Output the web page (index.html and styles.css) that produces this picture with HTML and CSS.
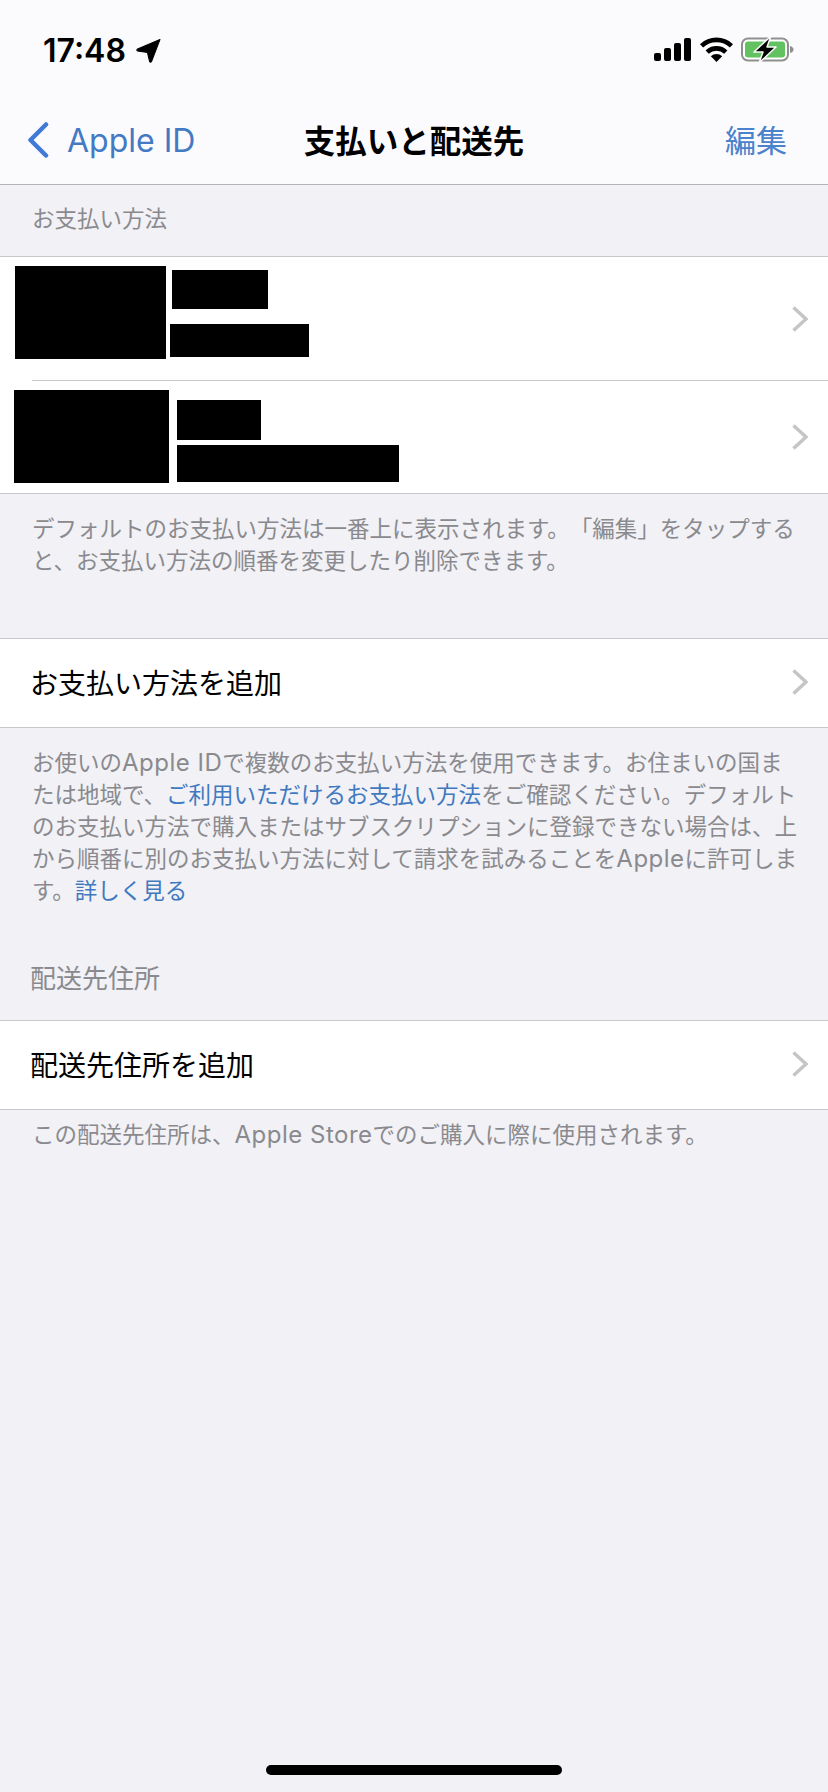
FILE: index.html
```html
<!DOCTYPE html>
<html lang="ja">
<head>
    <meta charset="UTF-8">
    <meta name="viewport" content="width=device-width, initial-scale=1.0">
    <title>支払いと配送先</title>
    <link rel="stylesheet" href="styles.css">
</head>
<body>
    <header class="top">
        <div class="status">
            <div class="time">
                <span>17:48</span>
                <svg class="arrow" viewBox="0 0 24 24"><path d="M23 1.500 L1.500 10.500 Q0 11.500 1.500 12.500 L11 14 L13 22.500 Q14 24 15 22.500 Z" fill="#000" stroke="#000" stroke-width="1" stroke-linejoin="round"/></svg>
            </div>
            <div class="status-icons">
                <svg class="signal" viewBox="0 0 37 23">
                    <rect x="0" y="15" width="7" height="8" rx="2"/>
                    <rect x="10" y="10" width="7" height="13" rx="2"/>
                    <rect x="20" y="5" width="7" height="18" rx="2"/>
                    <rect x="30" y="0" width="7" height="23" rx="2"/>
                </svg>
                <svg class="wifi" viewBox="0 0 32 24">
                    <path d="M1.500 8.500 A21 21 0 0 1 30.500 8.500" fill="none" stroke="#000" stroke-width="4.500"/>
                    <path d="M7 14.500 A13 13 0 0 1 25 14.500" fill="none" stroke="#000" stroke-width="4.500"/>
                    <path d="M16 24 L10.500 18.500 A8 8 0 0 1 21.500 18.500 Z"/>
                </svg>
                <svg class="battery" viewBox="0 0 53 25">
                    <rect x="1" y="1.500" width="46" height="22" rx="6" fill="#fff" stroke="#8f8f8f" stroke-width="2"/>
                    <rect x="4" y="4.500" width="40" height="16" rx="3" fill="#62c261"/>
                    <path d="M49 9 Q52.500 10 52.500 12.500 Q52.500 15 49 16 Z" fill="#8f8f8f"/>
                    <path d="M30 -1 L13 15 H22 L18 26 L35 10 H26 Z" fill="#000" stroke="#fbfbfd" stroke-width="1.500" stroke-linejoin="round"/>
                </svg>
            </div>
        </div>
        <nav class="nav">
            <a class="back">
                <svg class="back-chevron" viewBox="0 0 22 36"><path d="M19 2.500 L3.500 18 L19 33.500" fill="none" stroke="#3f7ad6" stroke-width="4.500" stroke-linecap="round" stroke-linejoin="round"/></svg>
                <span>Apple ID</span>
            </a>
            <h1 class="title">支払いと配送先</h1>
            <a class="edit">編集</a>
        </nav>
    </header>

    <main class="content">
        <div class="label label-first">お支払い方法</div>
        <section class="list">
            <div class="row row-card1">
                <div class="mask mask-a1"></div>
                <div class="card-text card-text1">
                    <div class="mask mask-a2"></div>
                    <div class="mask mask-a3"></div>
                </div>
                <svg class="chevron" viewBox="0 0 16 26"><path d="M1.500 1.500 L14 13 L1.500 24.500" fill="none" stroke="#c5c5c8" stroke-width="3.500"/></svg>
            </div>
            <div class="sep"></div>
            <div class="row row-card2">
                <div class="mask mask-b1"></div>
                <div class="card-text card-text2">
                    <div class="mask mask-b2"></div>
                    <div class="mask mask-b3"></div>
                </div>
                <svg class="chevron" viewBox="0 0 16 26"><path d="M1.500 1.500 L14 13 L1.500 24.500" fill="none" stroke="#c5c5c8" stroke-width="3.500"/></svg>
            </div>
        </section>
        <p class="foot foot-first">デフォルトのお支払い方法は一番上に表示されます。「編集」をタップすると、お支払い方法の順番を変更したり削除できます。</p>

        <section class="list">
            <div class="row row-add">
                <span>お支払い方法を追加</span>
                <svg class="chevron" viewBox="0 0 16 26"><path d="M1.500 1.500 L14 13 L1.500 24.500" fill="none" stroke="#c5c5c8" stroke-width="3.500"/></svg>
            </div>
        </section>
        <p class="foot">お使いの<span class="latin">Apple ID</span>で複数のお支払い方法を使用できます。お住まいの国または地域で、<a class="link">ご利用いただけるお支払い方法</a>をご確認ください。デフォルトのお支払い方法で購入またはサブスクリプションに登録できない場合は、上から順番に別のお支払い方法に対して請求を試みることを<span class="latin">Apple</span>に許可します。<a class="link">詳しく見る</a></p>

        <div class="label label-second">配送先住所</div>
        <section class="list">
            <div class="row row-add">
                <span>配送先住所を追加</span>
                <svg class="chevron" viewBox="0 0 16 26"><path d="M1.500 1.500 L14 13 L1.500 24.500" fill="none" stroke="#c5c5c8" stroke-width="3.500"/></svg>
            </div>
        </section>
        <p class="foot foot-last">この配送先住所は、<span class="latin">Apple Store</span>でのご購入に際に使用されます。</p>
    </main>

    <div class="home-bar"></div>
</body>
</html>
```

FILE: styles.css
```css
* {
    box-sizing: border-box;
}

body {
    margin: 0;
    width: 828px;
    height: 1792px;
    overflow: hidden;
    display: flex;
    flex-direction: column;
    background-color: #f1f1f6;
    color: #000000;
    font-family: 'Inter', 'Noto Sans CJK JP', sans-serif;
}

/* top bar */
.top {
    height: 185px;
    background-color: #fbfbfd;
    border-bottom: 1px solid #b2b2b7;
}

.status {
    height: 100px;
    padding: 37px 34px 0 43px;
    display: flex;
    justify-content: space-between;
    align-items: flex-start;
}

.time {
    display: flex;
    align-items: center;
    gap: 10px;
    height: 26px;
    font-size: 32px;
    font-weight: 600;
}

.arrow {
    width: 25px;
    height: 25px;
}

.status-icons {
    display: flex;
    align-items: flex-start;
    gap: 9px;
}

.signal {
    width: 37px;
    height: 23px;
    margin-top: 1px;
}

.wifi {
    width: 33px;
    height: 25px;
}

.battery {
    width: 53px;
    height: 25px;
    margin-left: -1px;
}

.nav {
    height: 84px;
    padding: 0 27px 4px;
    display: grid;
    grid-template-columns: 1fr auto 1fr;
    align-items: center;
}

.nav .title {
    margin: 0 0 2px;
    font-size: 31.500px;
    font-weight: 700;
}

.back {
    display: flex;
    align-items: center;
    gap: 18px;
    font-size: 32px;
    color: #4479c4;
}

.back-chevron {
    width: 22px;
    height: 36px;
}

.edit {
    justify-self: end;
    margin: 0 14px 3px 0;
    font-size: 31px;
    color: #4a82cc;
}

/* lists */
.label {
    color: #8a8a8e;
    display: flex;
    align-items: center;
}

.label-first {
    height: 71px;
    padding: 0 32px 8px;
    font-size: 22.500px;
}

.label-second {
    height: 113px;
    padding: 25px 30px 0;
    font-size: 26px;
}

.list {
    background-color: #ffffff;
    border-top: 1px solid #c8c8cc;
    border-bottom: 1px solid #c8c8cc;
}

.row {
    display: flex;
    align-items: flex-start;
}

.row-card1 {
    height: 123px;
    padding: 0 20px 0 15px;
}

.row-card2 {
    height: 112px;
    padding: 0 20px 0 14px;
}

.row-add {
    height: 88px;
    padding: 0 20px 2px 30px;
    align-items: center;
    font-size: 28px;
}

.sep {
    height: 1px;
    margin-left: 32px;
    background-color: #c8c8cc;
}

.chevron {
    width: 16px;
    height: 26px;
    margin-left: auto;
    align-self: center;
}

/* blacked out card details */
.mask {
    background-color: #000000;
}

.card-text1 {
    margin: 9px 0 0 4px;
}

.card-text2 {
    margin: 9px 0 0 8px;
}

.mask-a1 {
    width: 151px;
    height: 93px;
    margin-top: 9px;
}

.mask-a2 {
    width: 96px;
    height: 39px;
    margin: 4px 0 0 2px;
}

.mask-a3 {
    width: 139px;
    height: 33px;
    margin-top: 15px;
}

.mask-b1 {
    width: 155px;
    height: 93px;
    margin-top: 9px;
}

.mask-b2 {
    width: 84px;
    height: 40px;
    margin-top: 10px;
}

.mask-b3 {
    width: 222px;
    height: 37px;
    margin-top: 5px;
}

/* footnotes */
.foot {
    margin: 0;
    padding: 19px 28px 0 32px;
    font-size: 22.500px;
    line-height: 32px;
    color: #8a8a8e;
    text-spacing-trim: space-all;
}

.foot-first {
    height: 144px;
}

.foot-last {
    padding-top: 9px;
}

.latin {
    font-size: 24px;
    letter-spacing: 0.500px;
}

.link {
    color: #4079bf;
}

.home-bar {
    width: 296px;
    height: 10px;
    margin: auto auto 17px;
    border-radius: 5px;
    background-color: #000000;
}
```
